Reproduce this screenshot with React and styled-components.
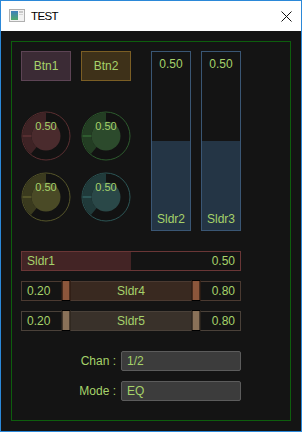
import React from "react";
import styled, { createGlobalStyle } from "styled-components";

const TEXT = "#a6d26a";

const Global = createGlobalStyle`
  html, body {
    margin: 0;
    padding: 0;
    background: #ffffff;
  }
  * {
    box-sizing: border-box;
  }
`;

const knobs = [
  { ring: "#5a2f31", arc: "#3e2325", inner: "#4a2b2d", tick: "#6e3a3c" },
  { ring: "#2d5a2d", arc: "#233d23", inner: "#2c4a2c", tick: "#3d7a3d" },
  { ring: "#55552a", arc: "#3a3a1e", inner: "#4a4a26", tick: "#6e6e34" },
  { ring: "#2c5555", arc: "#203a3a", inner: "#2a4848", tick: "#3a7272" },
];

const polar = (r, deg) => {
  const a = ((deg - 90) * Math.PI) / 180;
  return [25 + r * Math.cos(a), 25 + r * Math.sin(a)];
};

const arcPath = (r1, r2, from, to) => {
  const [x1, y1] = polar(r2, from);
  const [x2, y2] = polar(r2, to);
  const [x3, y3] = polar(r1, to);
  const [x4, y4] = polar(r1, from);
  const large = to - from > 180 ? 1 : 0;
  return `M${x1} ${y1} A${r2} ${r2} 0 ${large} 1 ${x2} ${y2} L${x3} ${y3} A${r1} ${r1} 0 ${large} 0 ${x4} ${y4} Z`;
};

const Knob = ({ c, value }) => {
  const start = -140;
  const end = start + value * 280;
  return (
    <KnobBox>
      <svg width="50" height="50" viewBox="0 0 50 50">
        <circle cx="25" cy="25" r="24" fill="#121212" stroke={c.ring} strokeWidth="1" />
        <path d={arcPath(14.5, 23.5, start, end)} fill={c.arc} />
        <circle cx="25" cy="25" r="14.5" fill={c.inner} />
        <line x1="1.5" y1="25" x2="10.5" y2="25" stroke={c.tick} strokeWidth="1" />
      </svg>
      <KnobValue>{value.toFixed(2)}</KnobValue>
    </KnobBox>
  );
};

const VSlider = ({ label, value }) => (
  <VTrack>
    <VFill style={{ height: `${value * 100}%` }} />
    <VValue>{value.toFixed(2)}</VValue>
    <VLabel>{label}</VLabel>
  </VTrack>
);

const HSlider = ({ label, value }) => (
  <HTrack $border="#6a3636">
    <HFill style={{ width: `${value * 100}%` }} />
    <HText>{label}</HText>
    <HText>{value.toFixed(2)}</HText>
  </HTrack>
);

const RangeSlider = ({ label, lo, hi, tone }) => (
  <HTrack $border={tone.border}>
    <RangeFill
      $color={tone.fill}
      style={{ left: `${lo * 100}%`, width: `${(hi - lo) * 100}%` }}
    />
    <Handle $color={tone.handle} style={{ left: `${lo * 100}%` }} />
    <Handle $color={tone.handle} style={{ left: `${hi * 100}%` }} />
    <HText>{lo.toFixed(2)}</HText>
    <HText>{label}</HText>
    <HText>{hi.toFixed(2)}</HText>
  </HTrack>
);

export default function App() {
  return (
    <>
      <Global />
      <Window>
        <TitleBar>
          <svg width="16" height="14" viewBox="0 0 16 14">
            <rect x="0.5" y="0.5" width="15" height="12" fill="#f2f2f2" stroke="#b0b0b0" />
            <defs>
              <linearGradient id="ico" x1="0" y1="0" x2="0" y2="1">
                <stop offset="0" stopColor="#3d7fbf" />
                <stop offset="1" stopColor="#4fa86a" />
              </linearGradient>
            </defs>
            <rect x="2" y="2" width="7" height="9" fill="url(#ico)" />
            <rect x="10" y="2" width="4" height="2" fill="#c8c8c8" />
            <rect x="10" y="5" width="4" height="1" fill="#d4d4d4" />
          </svg>
          <Title>TEST</Title>
          <Close>
            <svg width="11" height="11" viewBox="0 0 11 11">
              <path d="M0.5 0.5 L10.5 10.5 M10.5 0.5 L0.5 10.5" stroke="#111" strokeWidth="1" />
            </svg>
          </Close>
        </TitleBar>
        <Body>
          <Panel>
            <Top>
              <LeftCol>
                <ButtonRow>
                  <Btn $bg="#3b2b35" $border="#5d4455">Btn1</Btn>
                  <Btn $bg="#3e3119" $border="#7b5e24">Btn2</Btn>
                </ButtonRow>
                <KnobGrid>
                  {knobs.map((c, i) => (
                    <Knob key={i} c={c} value={0.5} />
                  ))}
                </KnobGrid>
              </LeftCol>
              <VGroup>
                <VSlider label="Sldr2" value={0.5} />
                <VSlider label="Sldr3" value={0.5} />
              </VGroup>
            </Top>
            <HGroup>
              <HSlider label="Sldr1" value={0.5} />
              <RangeSlider
                label="Sldr4"
                lo={0.2}
                hi={0.8}
                tone={{ border: "#4b3a31", fill: "#392920", handle: "#8c563b" }}
              />
              <RangeSlider
                label="Sldr5"
                lo={0.2}
                hi={0.8}
                tone={{ border: "#4a4139", fill: "#39312a", handle: "#8a7158" }}
              />
            </HGroup>
            <Form>
              <FieldRow>
                <FieldLabel>Chan :</FieldLabel>
                <FieldBox>1/2</FieldBox>
              </FieldRow>
              <FieldRow>
                <FieldLabel>Mode :</FieldLabel>
                <FieldBox>EQ</FieldBox>
              </FieldRow>
            </Form>
          </Panel>
        </Body>
      </Window>
    </>
  );
}

const Window = styled.div`
  width: 302px;
  height: 432px;
  border: 1px solid #2b88d8;
  display: flex;
  flex-direction: column;
  font-family: "Liberation Sans", Arial, sans-serif;
`;

const TitleBar = styled.div`
  height: 30px;
  background: #ffffff;
  display: flex;
  align-items: center;
  padding-left: 8px;
`;

const Title = styled.span`
  margin-left: 6px;
  font-size: 11.5px;
  letter-spacing: -0.6px;
  color: #000;
`;

const Close = styled.div`
  margin-left: auto;
  margin-right: 9px;
  display: flex;
`;

const Body = styled.div`
  flex: 1;
  background: #141414;
  padding: 10px;
`;

const Panel = styled.div`
  height: 100%;
  border: 1px solid #0d5e0d;
  padding: 9px 0 0 9px;
  color: ${TEXT};
  font-size: 12px;
`;

const Top = styled.div`
  display: flex;
  gap: 20px;
`;

const LeftCol = styled.div`
  width: 110px;
`;

const ButtonRow = styled.div`
  display: flex;
  gap: 10px;
`;

const Btn = styled.div`
  width: 50px;
  height: 30px;
  background: ${(p) => p.$bg};
  border: 1px solid ${(p) => p.$border};
  display: flex;
  align-items: center;
  justify-content: center;
`;

const KnobGrid = styled.div`
  margin-top: 30px;
  display: grid;
  grid-template-columns: 50px 50px;
  column-gap: 10px;
  row-gap: 11px;
`;

const KnobBox = styled.div`
  position: relative;
  width: 50px;
  height: 50px;

  svg {
    display: block;
  }
`;

const KnobValue = styled.span`
  position: absolute;
  left: 0;
  right: 0;
  top: 9px;
  text-align: center;
  font-size: 11px;
  line-height: 12px;
`;

const VGroup = styled.div`
  display: flex;
  gap: 10px;
`;

const VTrack = styled.div`
  position: relative;
  width: 40px;
  height: 180px;
  border: 1px solid #3a5674;
  display: flex;
  flex-direction: column;
  justify-content: flex-end;
`;

const VFill = styled.div`
  background: #243545;
`;

const VValue = styled.span`
  position: absolute;
  top: 5px;
  left: 0;
  right: 0;
  text-align: center;
  line-height: 14px;
`;

const VLabel = styled(VValue)`
  top: auto;
  bottom: 4px;
`;

const HGroup = styled.div`
  margin-top: 20px;
  display: flex;
  flex-direction: column;
  gap: 10px;
`;

const HTrack = styled.div`
  position: relative;
  width: 220px;
  height: 20px;
  border: 1px solid ${(p) => p.$border};
  display: flex;
  align-items: center;
  justify-content: space-between;
  padding: 0 5px;

  span {
    position: relative;
  }
`;

const HFill = styled.div`
  position: absolute;
  left: 0;
  top: 0;
  bottom: 0;
  background: #432425;
`;

const HText = styled.span`
  line-height: 14px;
`;

const RangeFill = styled.div`
  position: absolute;
  top: 0;
  bottom: 0;
  background: ${(p) => p.$color};
`;

const Handle = styled.div`
  position: absolute;
  top: -2px;
  width: 9px;
  height: 21px;
  transform: translateX(-50%);
  background: ${(p) => p.$color};
  border: 1px solid #000;
  z-index: 1;
`;

const Form = styled.div`
  margin-top: 20px;
  display: flex;
  flex-direction: column;
  gap: 10px;
`;

const FieldRow = styled.div`
  display: flex;
  align-items: center;
  gap: 5px;
`;

const FieldLabel = styled.span`
  width: 95px;
  text-align: right;
`;

const FieldBox = styled.div`
  width: 120px;
  height: 20px;
  background: #3c3c3c;
  border: 1px solid #5c5c5c;
  border-radius: 2px;
  display: flex;
  align-items: center;
  padding-left: 5px;
`;
